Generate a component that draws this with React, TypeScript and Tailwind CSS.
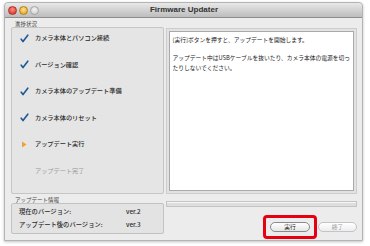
import React from 'react';

const jp = { fontFamily: '"Noto Sans CJK JP", "Liberation Sans", sans-serif' };

const Check: React.FC = () => (
  <svg width="9" height="9" viewBox="0 0 9 9" className="shrink-0">
    <path d="M1.2 5.2 L3 7.6 L7.8 1.2" fill="none" stroke="#1d5a94" strokeWidth="1.6" strokeLinecap="round" strokeLinejoin="round" />
  </svg>
);

const Arrow: React.FC = () => (
  <svg width="9" height="9" viewBox="0 0 9 9" className="shrink-0">
    <path d="M2 1.5 L6.5 4.5 L2 7.5 Z" fill="#f0a030" />
  </svg>
);

type StepState = 'done' | 'current' | 'todo';

const steps: { label: string; state: StepState }[] = [
  { label: 'カメラ本体とパソコン接続', state: 'done' },
  { label: 'バージョン確認', state: 'done' },
  { label: 'カメラ本体のアップデート準備', state: 'done' },
  { label: 'カメラ本体のリセット', state: 'done' },
  { label: 'アップデート実行', state: 'current' },
  { label: 'アップデート完了', state: 'todo' },
];

const App: React.FC = () => {
  return (
    <div className="w-[370px] h-[246px] bg-white overflow-hidden" style={jp}>
      <div className="ml-[4px] mt-[2px] w-[359px] h-[239px] flex flex-col rounded-t-[4px] bg-[#ececec] border border-[#b4b4b4] shadow-[0_1px_3px_rgba(0,0,0,0.25)]">
        {/* title bar */}
        <div className="relative h-[15px] shrink-0 flex items-center rounded-t-[4px] bg-gradient-to-b from-[#e8e8e8] to-[#bdbdbd] border-b border-[#8e8e8e]">
          <div className="flex items-center gap-[2px] pl-[3px]">
            <span className="w-[9px] h-[9px] rounded-full bg-[radial-gradient(circle_at_50%_35%,#ff8d80,#d8261c)] border border-[#a8322a]" />
            <span className="w-[9px] h-[9px] rounded-full bg-[radial-gradient(circle_at_50%_35%,#ffe08a,#e89a10)] border border-[#b0801e]" />
            <span className="w-[9px] h-[9px] rounded-full bg-[radial-gradient(circle_at_50%_35%,#f4f4f4,#c8c8c8)] border border-[#a5a5a5]" />
          </div>
          <div className="flex-1 text-center pr-[33px] text-[8px] font-bold text-[#333]" style={{ fontFamily: '"Liberation Sans", sans-serif' }}>
            Firmware Updater
          </div>
        </div>

        <div className="flex flex-1 pl-[6px] pr-[5px]">
          {/* left column */}
          <div className="w-[156px] flex flex-col">
            <div className="h-[10px] pl-[4px] pt-[3px] text-[5.5px] leading-[6px] text-[#444]">進捗状況</div>
            <div className="h-[167px] mt-[-1px] rounded-[2px] border border-[#c6c6c6] bg-[#e5e5e5] pt-[6px] pl-[8px] flex flex-col gap-[18.5px]">
              {steps.map((s) => (
                <div key={s.label} className="h-[8px] flex items-center gap-[6px]">
                  {s.state === 'done' && <Check />}
                  {s.state === 'current' && <Arrow />}
                  {s.state === 'todo' && <span className="w-[9px]" />}
                  <span
                    className={`text-[6.2px] leading-[8px] whitespace-nowrap ${
                      s.state === 'todo' ? 'text-[#9a9a9a]' : 'text-[#2a2a2a] font-medium'
                    }`}
                  >
                    {s.label}
                  </span>
                </div>
              ))}
            </div>
            <div className="h-[9px] pl-[4px] pt-[3px] text-[5.5px] leading-[6px] text-[#444]">アップデート情報</div>
            <div className="h-[31px] rounded-[2px] border border-[#c2c2c2] bg-[#e3e3e3] pl-[7px] pt-[4px] flex flex-col gap-[5px] text-[6.3px] leading-[8px] text-[#2a2a2a] font-medium">
              <div className="flex">
                <span className="w-[107px]">現在のバージョン:</span>
                <span>ver.2</span>
              </div>
              <div className="flex">
                <span className="w-[107px]">アップデート後のバージョン:</span>
                <span>ver.3</span>
              </div>
            </div>
          </div>

          {/* right column */}
          <div className="flex-1 flex flex-col ml-[2px]">
            <div className="mt-[10px] h-[166px] border border-[#cdcdcd] bg-[#e2e2e2] p-[2px]">
              <div className="h-full bg-white border border-[#a9a9a9] px-[3px] pt-[3px] text-[5.75px] leading-[10px] text-[#222]">
                <div>[実行]ボタンを押すと、アップデートを開始します。</div>
                <div className="mt-[8px] whitespace-nowrap">アップデート中はUSBケーブルを抜いたり、カメラ本体の電源を切っ</div>
                <div>たりしないでください。</div>
              </div>
            </div>
            <div className="mt-[7px] h-[6px] border border-[#c4c4c4] bg-[#dedede] shadow-[inset_0_1px_0_#f5f5f5]" />
            <div className="flex justify-end items-center mt-[8px] gap-[1px]">
              <div className="border-[3px] border-[#e60012] rounded-[4px] px-[4px] py-[4px]">
                <button className="w-[40px] h-[10px] rounded-full border border-[#8a8a8a] bg-gradient-to-b from-white to-[#e6e6e6] text-[5.8px] leading-[8px] text-[#222] flex items-center justify-center">
                  実行
                </button>
              </div>
              <button className="w-[39px] h-[10px] rounded-full border border-[#c4c4c4] bg-gradient-to-b from-white to-[#ededed] text-[5.8px] leading-[8px] text-[#9a9a9a] flex items-center justify-center">
                終了
              </button>
            </div>
          </div>
        </div>
      </div>
    </div>
  );
};

export default App;
